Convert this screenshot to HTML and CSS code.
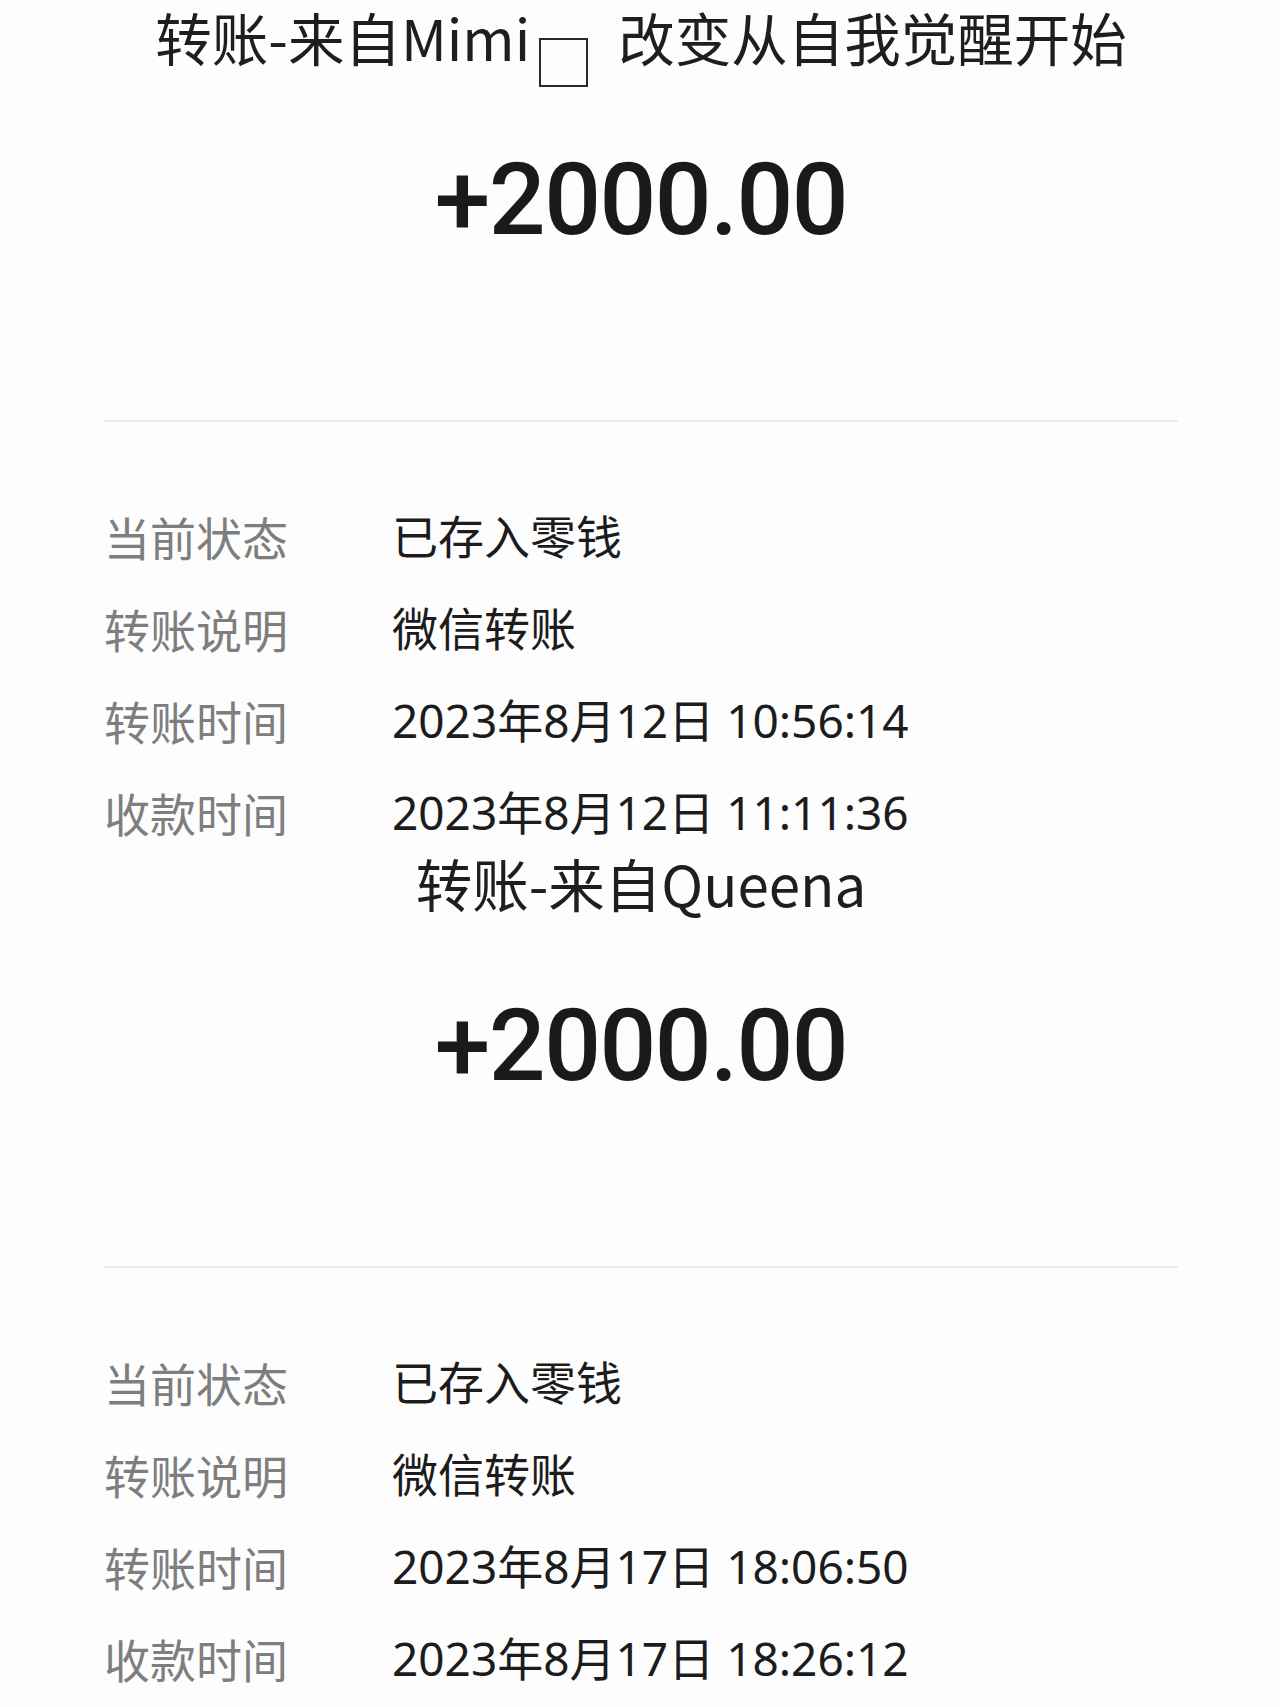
FILE: index.html
```html
<!DOCTYPE html>
<html lang="zh-CN">
<head>
  <meta charset="UTF-8" />
  <meta name="viewport" content="width=device-width, initial-scale=1.0"/>
  <title>转账详情</title>
  <link rel="stylesheet" href="styles.css">
</head>
<body>
  <div class="page">
    <section class="transfer">
      <h1 class="title">转账-来自Mimi<span class="tofu"></span>改变从自我觉醒开始</h1>
      <div class="amount">+2000.00</div>
      <hr class="divider" />
      <div class="details">
        <div class="row"><span class="label">当前状态</span><span class="value">已存入零钱</span></div>
        <div class="row"><span class="label">转账说明</span><span class="value">微信转账</span></div>
        <div class="row"><span class="label">转账时间</span><span class="value">2023年8月12日 10:56:14</span></div>
        <div class="row"><span class="label">收款时间</span><span class="value">2023年8月12日 11:11:36</span></div>
      </div>
    </section>

    <section class="transfer">
      <h1 class="title">转账-来自Queena</h1>
      <div class="amount">+2000.00</div>
      <hr class="divider" />
      <div class="details">
        <div class="row"><span class="label">当前状态</span><span class="value">已存入零钱</span></div>
        <div class="row"><span class="label">转账说明</span><span class="value">微信转账</span></div>
        <div class="row"><span class="label">转账时间</span><span class="value">2023年8月17日 18:06:50</span></div>
        <div class="row"><span class="label">收款时间</span><span class="value">2023年8月17日 18:26:12</span></div>
      </div>
    </section>
  </div>
</body>
</html>
```
FILE: styles.css
```css
body {
  margin: 0;
  background: #fdfdfd;
  font-family: "Noto Sans CJK SC", "Noto Sans", sans-serif;
  color: #1c1c1c;
}
.page {
  padding: 0 102px 0 104px;
}
.title {
  margin: 0;
  height: 72px;
  line-height: 72px;
  font-size: 56.5px;
  font-weight: 400;
  text-align: center;
  white-space: nowrap;
  color: #1e1e1e;
}
.tofu {
  display: inline-block;
  width: 45px;
  height: 45px;
  border: 2px solid #2a2a2a;
  margin: 0 30px 0 9px;
  vertical-align: -26px;
}
.amount {
  margin-top: 68px;
  height: 120px;
  line-height: 120px;
  font-family: Roboto, "Liberation Sans", sans-serif;
  font-size: 100px;
  font-weight: 500;
  text-align: center;
  letter-spacing: -1.5px;
  color: #1a1a1a;
}
.divider {
  margin: 160px 0 0;
  border: none;
  height: 2px;
  background: #ececec;
}
.details {
  padding: 82px 0 2px;
}
.row {
  display: flex;
  height: 64px;
  line-height: 64px;
  font-size: 46px;
  margin-bottom: 28px;
}
.row:last-child {
  margin-bottom: 0;
}
.label {
  width: 288px;
  flex-shrink: 0;
  color: #7e7e7e;
}
.value {
  font-family: "Noto Sans", "Noto Sans CJK SC", sans-serif;
  color: #1c1c1c;
}
```
